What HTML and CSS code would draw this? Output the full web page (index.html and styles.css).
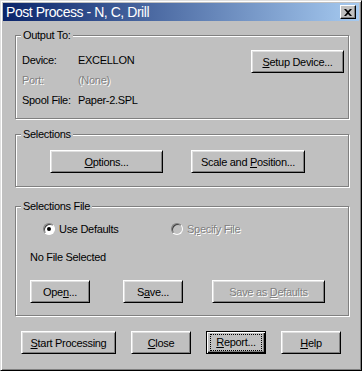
FILE: index.html
```html
<!DOCTYPE html>
<html lang="en">
<head>
    <meta charset="UTF-8">
    <title>Post Process - N, C, Drill</title>
    <link rel="stylesheet" href="styles.css">
</head>
<body>
    <div class="window">
        <div class="titlebar">
            <span class="title">Post Process - N, C, Drill</span>
            <button class="title-close">
                <svg width="8" height="7" viewBox="0 0 8 7"><path d="M0 0h2l2 2 2-2h2L5 3.5 8 7H6L4 5 2 7H0l3-3.5z" fill="#000"/></svg>
            </button>
        </div>

        <div class="content">
            <!-- Output To -->
            <div class="group group-output">
                <span class="group-label">Output To:</span>
                <div class="info">
                    <span>Device:</span><span>EXCELLON</span>
                    <span class="disabled">Port:</span><span class="disabled">(None)</span>
                    <span>Spool File:</span><span>Paper-2.SPL</span>
                </div>
                <button class="btn btn-setup"><u>S</u>etup Device...</button>
            </div>

            <!-- Selections -->
            <div class="group group-selections">
                <span class="group-label">Selections</span>
                <button class="btn btn-options"><u>O</u>ptions...</button>
                <button class="btn btn-scale">Scale and <u>P</u>osition...</button>
            </div>

            <!-- Selections File -->
            <div class="group group-file">
                <span class="group-label">Selections File</span>
                <div class="radios">
                    <label class="radio radio-first"><span class="radio-dot checked"></span><span>Use Defaults</span></label>
                    <label class="radio disabled"><span class="radio-dot off"></span><span>S<u>p</u>ecify File</span></label>
                </div>
                <div class="file-name">No File Selected</div>
                <div class="file-buttons">
                    <button class="btn btn-small">Ope<u>n</u>...</button>
                    <button class="btn btn-small btn-save">S<u>a</u>ve...</button>
                    <button class="btn btn-defaults disabled">Save as <u>D</u>efaults</button>
                </div>
            </div>

            <div class="actions">
                <button class="btn btn-start"><u>S</u>tart Processing</button>
                <button class="btn btn-small"><u>C</u>lose</button>
                <button class="btn btn-small btn-default"><span class="focus"><u>R</u>eport...</span></button>
                <button class="btn btn-small"><u>H</u>elp</button>
            </div>
        </div>
    </div>
</body>
</html>
```

FILE: styles.css
```css
body {
    margin: 0;
    background-color: #c0c0c0;
}

.window {
    box-sizing: border-box;
    width: 362px;
    height: 371px;
    padding: 2px;
    background-color: #c0c0c0;
    border: 1px solid;
    border-color: #dfdfdf #000 #000 #dfdfdf;
    box-shadow: inset 1px 1px #fff, inset -1px -1px #808080;
    font-family: "Liberation Sans", Arial, sans-serif;
    font-size: 11px;
    letter-spacing: -0.3px;
    color: #000;
}

.titlebar {
    display: flex;
    align-items: center;
    justify-content: space-between;
    height: 18px;
    padding: 0 3px 0 3px;
    background: linear-gradient(to right, #0a246a, #a6caf0);
    color: #fff;
}

.title {
    font-size: 14px;
    letter-spacing: -0.45px;
}

.title-close {
    box-sizing: border-box;
    display: flex;
    align-items: center;
    justify-content: center;
    width: 16px;
    height: 14px;
    padding: 0;
    background-color: #c0c0c0;
    border: 1px solid;
    border-color: #fff #000 #000 #fff;
    box-shadow: inset -1px -1px #808080;
}

.content {
    padding: 14px 10px 0 12px;
}

/* Etched group boxes */
.group {
    position: relative;
    border: 1px solid #808080;
    box-shadow: inset 1px 1px #fff, 1px 1px #fff;
}

.group-label {
    position: absolute;
    top: -7px;
    left: 5px;
    padding: 0 2px;
    line-height: 13px;
    background-color: #c0c0c0;
}

.group-output {
    display: flex;
    justify-content: space-between;
    align-items: flex-start;
    padding: 14px 4px 8px 6px;
}

.info {
    display: grid;
    grid-template-columns: 56px auto;
    grid-auto-rows: 20px;
    line-height: 20px;
}

.group-selections {
    display: flex;
    margin-top: 15px;
    padding: 15px 0 13px 34px;
    gap: 28px;
}

.group-file {
    margin-top: 19px;
    padding: 14px 0 12px 0;
}

.radios {
    display: flex;
    height: 16px;
    padding-left: 27px;
}

.radio {
    display: flex;
    align-items: center;
    gap: 4px;
}

.radio-first {
    width: 128px;
}

.radio-dot {
    position: relative;
    box-sizing: border-box;
    width: 12px;
    height: 12px;
    border-radius: 50%;
    background-color: #fff;
    border: 1px solid;
    border-color: #808080 #fff #fff #808080;
    box-shadow: inset 1px 1px #404040;
}

.radio-dot.off {
    background-color: #c0c0c0;
}

.radio-dot.checked::after {
    content: "";
    position: absolute;
    left: 3px;
    top: 3px;
    width: 4px;
    height: 4px;
    border-radius: 50%;
    background-color: #000;
}

.file-name {
    margin-top: 12px;
    padding-left: 14px;
    height: 16px;
    line-height: 16px;
}

.file-buttons {
    display: flex;
    margin-top: 15px;
    padding-left: 14px;
}

.btn-save {
    margin-left: 33px;
}

.btn-defaults {
    width: 113px;
    margin-left: 29px;
}

.actions {
    display: flex;
    gap: 15px;
    margin-top: 15px;
    padding-left: 6px;
}

/* Buttons */
.btn {
    box-sizing: border-box;
    height: 23px;
    padding: 0;
    background-color: #c0c0c0;
    border: 1px solid;
    border-color: #fff #000 #000 #fff;
    box-shadow: inset 1px 1px #dfdfdf, inset -1px -1px #808080;
    font-family: inherit;
    font-size: 11px;
    letter-spacing: -0.3px;
    color: #000;
    text-align: center;
}

.btn-setup {
    width: 93px;
}

.btn-options {
    width: 113px;
}

.btn-scale {
    width: 114px;
}

.btn-small {
    width: 60px;
}

.btn-start {
    width: 95px;
}

.btn-default {
    border-color: #000;
    box-shadow: inset 1px 1px #fff, inset -1px -1px #000, inset -2px -2px #808080;
}

.focus {
    display: block;
    margin: 0 3px;
    height: 15px;
    line-height: 15px;
    border: 1px dotted #000;
}

.disabled {
    color: #808080;
    text-shadow: 1px 1px #fff;
}
```
